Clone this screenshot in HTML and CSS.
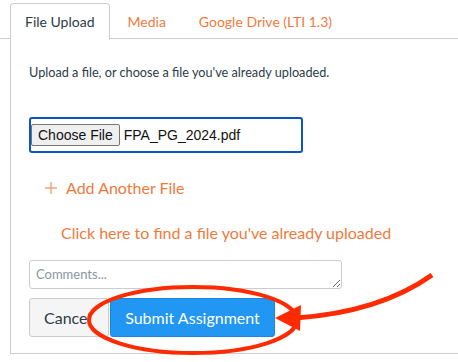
FILE: index.html
```html
<!DOCTYPE html>
<html lang="en">
<head>
  <meta charset="UTF-8">
  <title>Submit Assignment</title>
  <link rel="stylesheet" href="styles.css">
</head>
<body>

  <div class="tabs">
    <div class="tab active">File Upload</div>
    <div class="tab">Media</div>
    <div class="tab">Google Drive (LTI 1.3)</div>
  </div>

  <div class="panel">
    <p class="intro">Upload a file, or choose a file you've already uploaded.</p>

    <div class="file-box">
      <span class="choose-btn">Choose File</span>
      <span class="file-name">FPA_PG_2024.pdf</span>
    </div>

    <div class="add-file">
      <svg class="plus" width="12" height="12" viewBox="0 0 12 12">
        <path d="M6 0 V12 M0 6 H12" stroke="#f4a27a" stroke-width="1.4"/>
      </svg>
      Add Another File
    </div>

    <div class="find-file">Click here to find a file you've already uploaded</div>

    <textarea class="comments" placeholder="Comments..."></textarea>

    <div class="actions">
      <button class="btn cancel">Cancel</button>
      <button class="btn submit">Submit Assignment</button>
    </div>
  </div>

  <svg class="markup" width="458" height="362" viewBox="0 0 458 362">
    <ellipse cx="193" cy="320" rx="104" ry="33" fill="none" stroke="#ff2a00" stroke-width="4"/>
    <path d="M432 275 Q 380 312 296 318" fill="none" stroke="#ff2a00" stroke-width="5"/>
    <polygon points="275,318 301,305 300,331" fill="#ff2a00"/>
  </svg>

</body>
</html>
```

FILE: styles.css
```css
body {
  font-family: Lato, "Open Sans", sans-serif;
  background: #fff;
  color: #2d3b45;
  margin: 0;
  position: relative;
  width: 458px;
  height: 362px;
  overflow: hidden;
}

.tabs {
  display: flex;
  gap: 3px;
  padding: 3px 0 0 10px;
  border-bottom: 1px solid #c7cdd1;
  height: 35px;
}

.tab {
  padding: 0 14px;
  line-height: 35px;
  font-size: 14px;
  color: #ef7a3e;
  border: 1px solid transparent;
  border-bottom: none;
}

.tab.active {
  color: #2d3b45;
  background: #fff;
  border-color: #c7cdd1;
  border-radius: 4px 4px 0 0;
  margin-bottom: -1px;
  height: 36px;
}

.panel {
  margin-left: 10px;
  border-left: 1px solid #c7cdd1;
  border-bottom: 1px solid #c7cdd1;
  padding: 25px 0 16px 18px;
}

.intro {
  margin: 0;
  font-size: 12.7px;
  line-height: 16px;
}

.file-box {
  margin-top: 37px;
  width: 270px;
  height: 32px;
  border: 2px solid #0a55c5;
  border-radius: 3px;
  display: flex;
  align-items: center;
  font-family: "Liberation Sans", Arial, sans-serif;
  font-size: 14px;
  color: #111;
}

.choose-btn {
  background: #efefef;
  border: 1px solid #767676;
  border-radius: 2px;
  padding: 2px 6px;
  line-height: 16px;
}

.file-name {
  margin-left: 4px;
}

.add-file {
  margin: 25px 0 0 16px;
  color: #ef7a3e;
  font-size: 16px;
  line-height: 20px;
  display: flex;
  align-items: center;
  gap: 9px;
}

.find-file {
  margin: 25px 0 0 32px;
  color: #ef7a3e;
  font-size: 16px;
  line-height: 20px;
}

.comments {
  display: block;
  margin-top: 17px;
  width: 313px;
  height: 29px;
  box-sizing: border-box;
  border: 1px solid #c7cdd1;
  border-radius: 3px;
  padding: 5px 6px;
  font-family: Lato, sans-serif;
  font-size: 13px;
  resize: vertical;
}

.comments::placeholder {
  color: #8b969e;
}

.actions {
  display: flex;
  gap: 1px;
  margin-top: 9px;
}

.btn {
  height: 39px;
  font-family: Lato, sans-serif;
  font-size: 16px;
  border-radius: 3px;
  padding: 0 14px;
  cursor: pointer;
}

.cancel {
  width: 80px;
  background: #f5f5f5;
  color: #2d3b45;
  border: 1px solid #c7cdd1;
  text-align: left;
}

.submit {
  width: 165px;
  background: #2196f3;
  color: #fff;
  border: 1px solid #1a87de;
}

.markup {
  position: absolute;
  left: 0;
  top: 0;
  pointer-events: none;
}
```
